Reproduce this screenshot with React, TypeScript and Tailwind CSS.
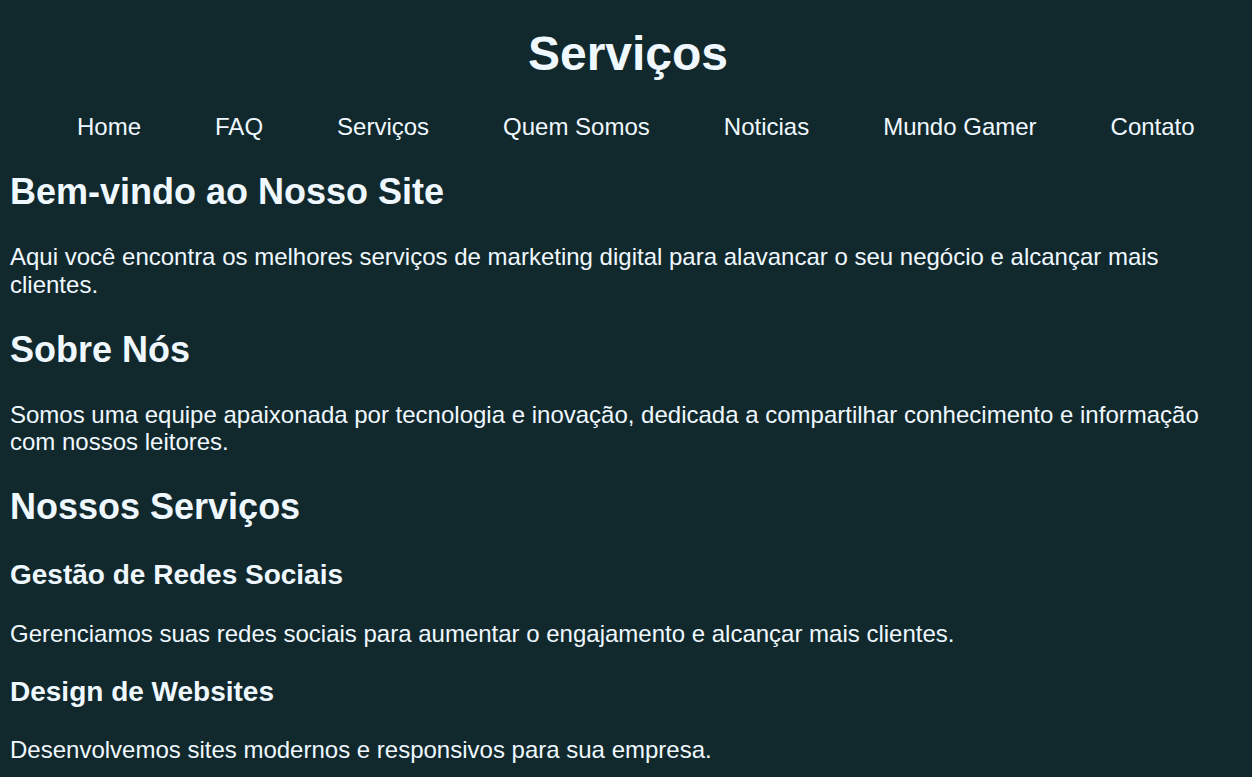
import React from "react";

export default function App() {
  const nav = ["Home", "FAQ", "Serviços", "Quem Somos", "Noticias", "Mundo Gamer", "Contato"];
  return (
    <div
      className="min-h-[777px] w-full bg-[#11292c] text-[#f0f8ff] pl-[10px] pr-[6px] pb-[24px]"
      style={{ fontFamily: '"Liberation Sans", Arial, sans-serif' }}
    >
      <header>
        <h1 className="pt-[26px] text-center text-[48px] font-bold leading-[1.15]">Serviços</h1>
        <nav className="mt-[32px]">
          <ul className="flex gap-[74px] pl-[67px] text-[24px] leading-[1.15]">
            {nav.map((n) => (
              <li key={n}>
                <a href="#">{n}</a>
              </li>
            ))}
          </ul>
        </nav>
      </header>
      <main>
        <h2 className="mt-[30px] text-[36px] font-bold leading-[1.15]">Bem-vindo ao Nosso Site</h2>
        <p className="mt-[31px] text-[24px] leading-[1.15]">
          Aqui você encontra os melhores serviços de marketing digital para alavancar o seu negócio e alcançar mais clientes.
        </p>
        <h2 className="mt-[31px] text-[36px] font-bold leading-[1.15]">Sobre Nós</h2>
        <p className="mt-[30px] text-[24px] leading-[1.15]">
          Somos uma equipe apaixonada por tecnologia e inovação, dedicada a compartilhar conhecimento e informação com nossos leitores.
        </p>
        <h2 className="mt-[30px] text-[36px] font-bold leading-[1.15]">Nossos Serviços</h2>
        <h3 className="mt-[32px] text-[28px] font-bold leading-[1.15]">Gestão de Redes Sociais</h3>
        <p className="mt-[28px] text-[24px] leading-[1.15]">
          Gerenciamos suas redes sociais para aumentar o engajamento e alcançar mais clientes.
        </p>
        <h3 className="mt-[29px] text-[28px] font-bold leading-[1.15]">Design de Websites</h3>
        <p className="mt-[28px] text-[24px] leading-[1.15]">Desenvolvemos sites modernos e responsivos para sua empresa.</p>
      </main>
    </div>
  );
}
